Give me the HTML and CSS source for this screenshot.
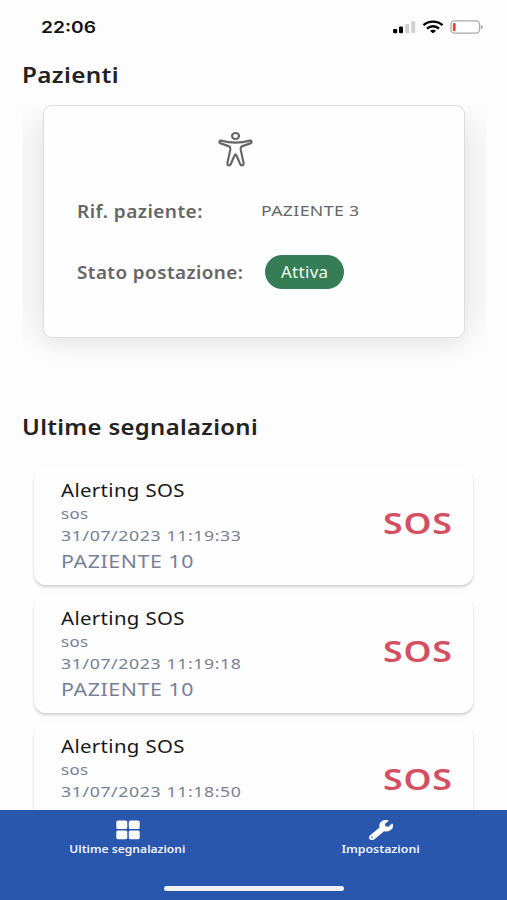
FILE: index.html
```html
<!DOCTYPE html>
<html lang="it">
<head>
<meta charset="utf-8">
<title>Pazienti</title>
<link rel="stylesheet" href="styles.css">
</head>
<body>
<div class="app">
  <header class="status">
    <span class="w clock">22:06</span>
    <div class="status-icons">
      <svg width="24" height="14" viewBox="0 0 24 14"><rect x="1" y="9" width="4.200" height="4.200" rx="1.200"/><rect x="7" y="6.600" width="4" height="6.600" rx="1.200"/><g fill="#d0d0d0"><rect x="13.200" y="4" width="4" height="9.200" rx="1.200"/><rect x="19.200" y="1.200" width="4" height="12" rx="1.200"/></g></svg>
      <svg width="22" height="14" viewBox="0 0 22 14"><g fill="none" stroke="#000" stroke-width="2.400"><path d="M1.500 5.200C6.500 .4 15.500 .4 20.500 5.200"/><path d="M5 8.600C8.500 5.400 13.500 5.400 17 8.600"/></g><path d="M8 10.800Q11 8.600 14 10.800L11.800 12.700Q11 13.300 10.200 12.700Z"/></svg>
      <svg width="34" height="14" viewBox="0 0 34 14"><rect x=".9" y=".9" width="28.700" height="12.200" rx="3.600" fill="#fff" stroke="#aaa" stroke-width="1.300"/><rect x="2.800" y="3" width="2.900" height="8" rx="1" fill="#e8463a"/><path d="M31 5v4.200q1.700-.6 1.700-2.100T31 5Z" fill="#999"/></svg>
    </div>
  </header>
  <h2 class="title"><span class="w t1">Pazienti</span></h2>
  <section class="slider">
    <article class="patient">
      <svg class="person" width="35" height="36" viewBox="0 0 36 36" preserveAspectRatio="none" fill="none" stroke="#666" stroke-width="2.200" stroke-linejoin="round"><ellipse cx="18" cy="5" rx="3.600" ry="3"/><path d="M3.200 9.600Q18 13.600 32.800 9.600C34.900 9.300 35.400 11.600 33.200 12.400L24.500 15.400C23.200 15.900 23.100 17 23.400 19L26.400 32.200C26.500 34.700 23.600 35 22.800 33L19 24.500Q18 22.400 17 24.500L13.200 33C12.400 35 9.500 34.700 9.600 32.200L12.600 19C12.900 17 12.800 15.900 11.500 15.400L2.800 12.400C.6 11.600 1.100 9.300 3.200 9.600Z"/></svg>
      <div class="row"><span class="label"><span class="w r1">Rif. paziente:</span></span><span class="w ref">PAZIENTE 3</span></div>
      <div class="row second"><span class="label"><span class="w r2">Stato postazione:</span></span><span class="badge"><span class="w act">Attiva</span></span></div>
    </article>
  </section>
  <h2 class="title latest"><span class="w t2">Ultime segnalazioni</span></h2>
  <section class="alerts">
    <article class="alert"><div class="info"><p class="name"><span class="w n">Alerting SOS</span></p><p class="kind"><span class="w k">sos</span></p><p class="date"><span class="w d">31/07/2023 11:19:33</span></p><p class="who"><span class="w p">PAZIENTE 10</span></p></div><strong class="w sos">SOS</strong></article>
    <article class="alert"><div class="info"><p class="name"><span class="w n">Alerting SOS</span></p><p class="kind"><span class="w k">sos</span></p><p class="date"><span class="w d">31/07/2023 11:19:18</span></p><p class="who"><span class="w p">PAZIENTE 10</span></p></div><strong class="w sos">SOS</strong></article>
    <article class="alert"><div class="info"><p class="name"><span class="w n">Alerting SOS</span></p><p class="kind"><span class="w k">sos</span></p><p class="date"><span class="w d">31/07/2023 11:18:50</span></p></div><strong class="w sos">SOS</strong></article>
  </section>
  <footer class="bottom">
    <nav class="tabs">
      <a class="tab"><svg width="26" height="20" viewBox="0 0 26 20" fill="#fff"><rect x="2.300" y=".4" width="11" height="8.700" rx="1.600"/><rect x="14.800" y=".4" width="10.900" height="8.700" rx="1.600"/><rect x="2.300" y="10.500" width="11" height="8.700" rx="1.600"/><rect x="14.800" y="10.500" width="10.900" height="8.700" rx="1.600"/></svg><span class="w l1">Ultime segnalazioni</span></a>
      <a class="tab"><svg width="24" height="20" viewBox="0 0 512 512" preserveAspectRatio="none" fill="#fff" stroke="#fff" stroke-width="12"><path fill-rule="evenodd" d="M507.700 109.100c-2.200-9-13.500-12.100-20.100-5.500l-74.400 74.400-67.900-11.300L334 98.900l74.400-74.400c6.600-6.600 3.400-17.900-5.700-20.200-47.400-11.700-99.600.9-136.600 37.900-39.600 39.600-50.500 97.100-34.100 147.200L18.700 402.800c-25 25-25 65.500 0 90.500s65.500 25 90.500 0l213.200-213.200c50.100 16.700 107.500 5.700 147.400-34.200 37.100-37.100 49.700-89.300 37.900-136.800zM64 472c-13.200 0-24-10.800-24-24s10.700-24 24-24 24 10.700 24 24-10.700 24-24 24z"/></svg><span class="w l2">Impostazioni</span></a>
    </nav>
    <div class="home"></div>
  </footer>
</div>
</body>
</html>
```

FILE: styles.css
```css
* { box-sizing: border-box; margin: 0; padding: 0; }
body { width: 507px; height: 900px; overflow: hidden; background: #fdfdfd; font-family: "Noto Sans", sans-serif; }
.app { height: 900px; display: flex; flex-direction: column; }
.app > * { flex-shrink: 0; }

/* Extended letterforms: each label is widened from its left edge */
.w { display: inline-block; white-space: nowrap; transform-origin: left center; }
.t1 { letter-spacing: .3px; transform: scaleX(1.13); }
.t2 { letter-spacing: .3px; transform: scaleX(1.11); }
.r1 { letter-spacing: .4px; transform: scaleX(1.12); }
.r2 { letter-spacing: .4px; transform: scaleX(1.108); }
.act { letter-spacing: .3px; transform: scaleX(1.09); }
.n { letter-spacing: .3px; transform: scaleX(1.117); }
.k { letter-spacing: .3px; transform: scaleX(1.12); }
.d { letter-spacing: .5px; transform: scaleX(1.182); }
.p { letter-spacing: .5px; transform: scaleX(1.185); }
.tab .w { transform-origin: center; }
.l1 { transform: scaleX(1.05); }
.l2 { transform: scaleX(1.07); }

.status { height: 60px; padding: 16px 23px 0 41px; display: flex; justify-content: space-between; align-items: flex-start; }
.clock { font: 600 16px/23px Inter, sans-serif; color: #111; transform: scaleX(1.2); }
.status-icons { display: flex; gap: 6px; padding-top: 4px; }
.title { height: 30px; padding-left: 22px; font-size: 21.5px; line-height: 30px; font-weight: 600; color: #222; }
.slider { height: 264px; margin: 15px 21px 0 22px; padding: 0 21px; overflow: hidden; background: linear-gradient(#fcfcfc, #f6f6f6 40px, #f6f6f6 200px, #fdfdfd 250px); }
.patient { height: 233px; border: 1px solid #ddd; border-radius: 9px; background: #fefefe; box-shadow: 0 9px 22px rgba(0,0,0,.08); padding: 25px 0 0 33px; color: #666; }
.person { display: block; margin-left: 141px; }
.row { display: flex; align-items: center; height: 34px; margin-top: 27px; font-size: 17px; }
.label { width: 184px; font-weight: 600; }
.row.second .label { width: 188px; }
.ref { font-size: 15.3px; letter-spacing: .3px; transform: scaleX(1.158); margin-top: -2px; }
.badge { width: 79px; height: 34px; border-radius: 17px; background: #347d55; padding-left: 16px; color: #f4faf6; font-size: 15.5px; line-height: 34px; }
.latest { margin-top: 43px; }
.alerts { height: 368px; padding: 26px 34px 0; overflow: hidden; }
.alert { height: 117px; margin-bottom: 11px; border-radius: 12px; background: #fefefe; box-shadow: 0 2px 3px rgba(0,0,0,.18); padding: 9px 20px 0 27px; display: flex; justify-content: space-between; }
.info { color: #778096; }
.name { font-size: 18.3px; line-height: 26px; color: #181818; }
.kind { font-size: 15px; line-height: 21px; }
.date { font-size: 15px; line-height: 22px; }
.who { font-size: 18px; line-height: 30px; }
.sos { font-size: 28.5px; line-height: 40px; font-weight: 600; color: #d44f61; letter-spacing: .6px; margin-top: 26px; transform-origin: right center; transform: scaleX(1.25); }
.bottom { height: 90px; background: #2857ad; }
.tabs { display: grid; grid-template-columns: 1fr 1fr; }
.tab { display: flex; flex-direction: column; align-items: center; padding-top: 10px; padding-left: 1px; color: #eef3fc; font-size: 11.5px; line-height: 18px; font-weight: 600; }
.home { width: 180px; height: 5px; border-radius: 3px; background: #f0f2f7; margin: 28px auto 0; }
```
